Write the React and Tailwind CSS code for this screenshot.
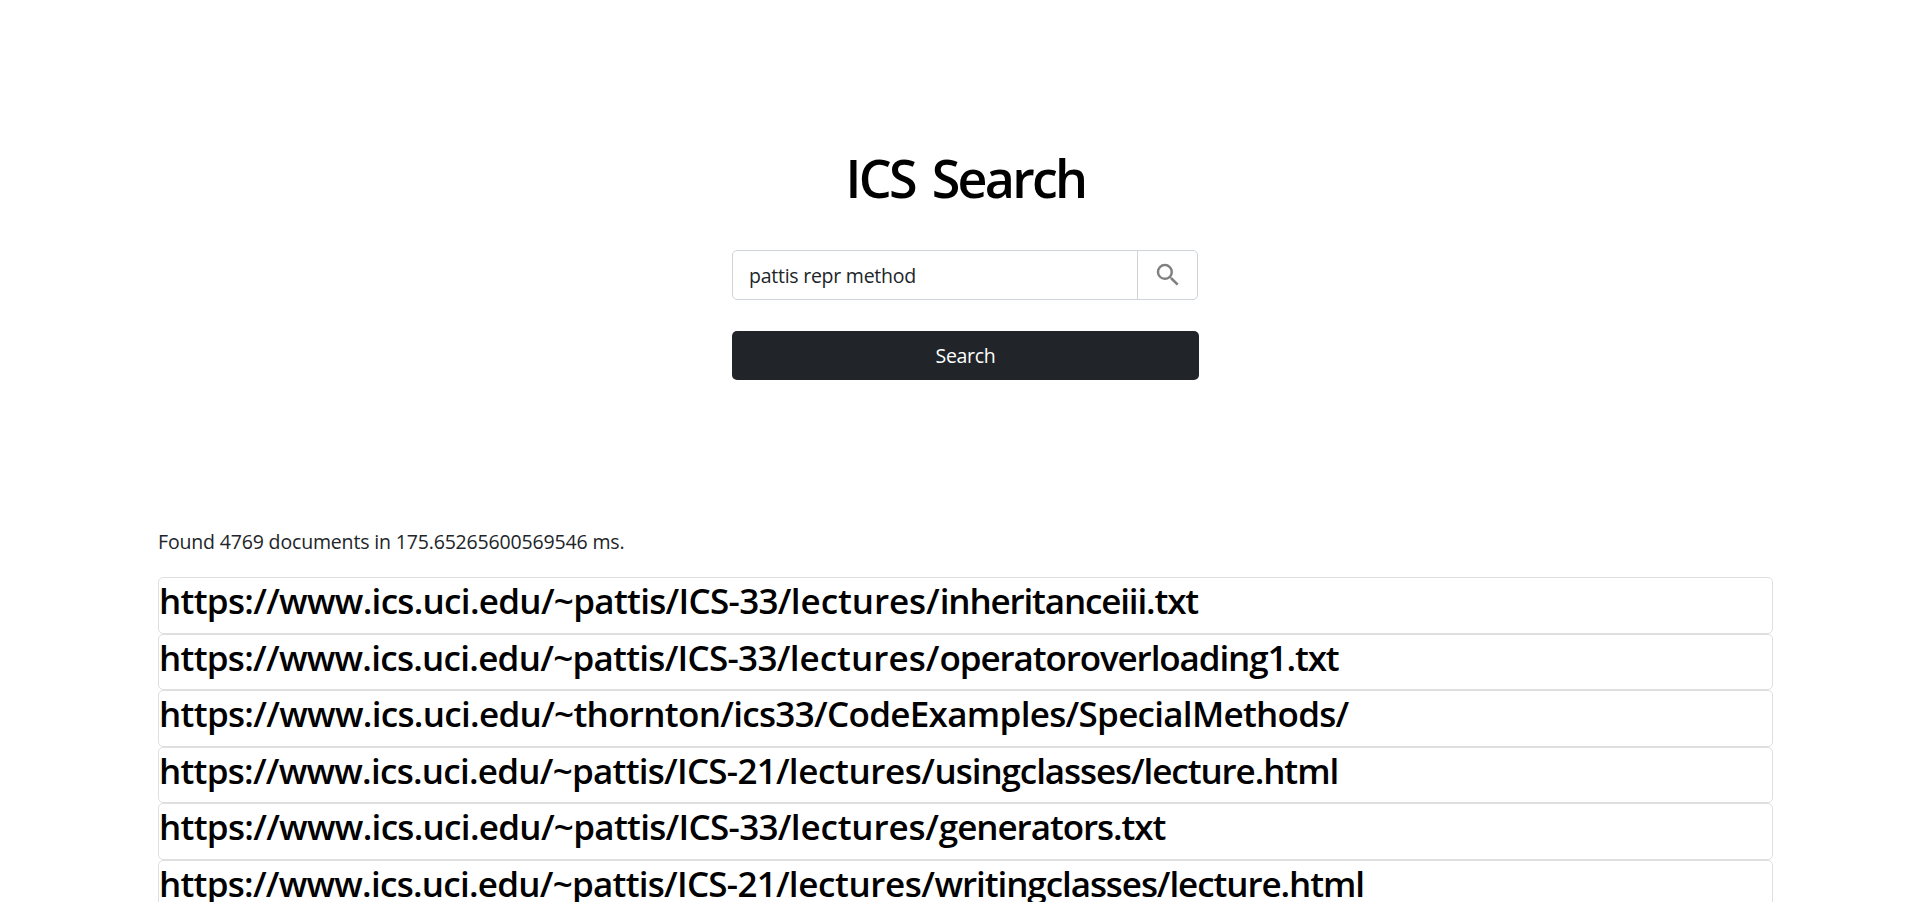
import React from "react";

const results = [
  {
    base: "https://www.ics.uci.edu/~pattis/ICS-33/",
    folder: "lectures/",
    page: "inheritanceiii.txt",
    baseTracking: "tracking-[-0.69px]",
    folderTracking: "tracking-[-0.05px]",
    pageTracking: "tracking-[-1.15px]",
  },
  {
    base: "https://www.ics.uci.edu/~pattis/ICS-33/",
    folder: "lectures/",
    page: "operatoroverloading1.txt",
    baseTracking: "tracking-[-0.72px]",
    folderTracking: "tracking-[0.05px]",
    pageTracking: "tracking-[-1.1px]",
  },
  {
    base: "https://www.ics.uci.edu/~thornton/ics33/",
    folder: "CodeExamples/",
    page: "SpecialMethods/",
    baseTracking: "tracking-[-0.68px]",
    folderTracking: "tracking-[-0.68px]",
    pageTracking: "tracking-[-0.72px]",
  },
  {
    base: "https://www.ics.uci.edu/~pattis/ICS-21/",
    folder: "lectures/",
    page: "usingclasses/lecture.html",
    baseTracking: "tracking-[-0.74px]",
    folderTracking: "tracking-[-0.4px]",
    pageTracking: "tracking-[-1.08px]",
  },
  {
    base: "https://www.ics.uci.edu/~pattis/ICS-33/",
    folder: "lectures/",
    page: "generators.txt",
    baseTracking: "tracking-[-0.69px]",
    folderTracking: "tracking-[-0.15px]",
    pageTracking: "tracking-[-1.05px]",
  },
  {
    base: "https://www.ics.uci.edu/~pattis/ICS-21/",
    folder: "lectures/",
    page: "writingclasses/lecture.html",
    baseTracking: "tracking-[-0.74px]",
    folderTracking: "tracking-[-0.4px]",
    pageTracking: "tracking-[-1.08px]",
  },
];

function SearchIcon() {
  return (
    <svg className="size-[30px]" viewBox="0 0 24 24" fill="#808080" aria-hidden="true">
      <path d="M15.5 14h-.79l-.28-.27A6.471 6.471 0 0 0 16 9.5 6.5 6.5 0 1 0 9.5 16c1.61 0 3.09-.59 4.23-1.57l.27.28v.79l5 4.99L20.49 19l-4.99-5zm-6 0C7.01 14 5 11.99 5 9.5S7.01 5 9.5 5 14 7.01 14 9.5 11.99 14 9.5 14z" />
    </svg>
  );
}

function SearchForm() {
  return (
    <form className="flex w-[467px] flex-col" onSubmit={(e) => e.preventDefault()}>
      <div className="flex h-[50px] w-[466px] rounded-[5px] border border-[#ced4da]">
        <input
          className="min-w-0 flex-1 rounded-l-[5px] pt-[2px] pl-[16px] text-[19.5px] tracking-[-0.25px] text-[#212529] outline-none"
          defaultValue="pattis repr method"
          aria-label="Query"
        />
        <span className="flex w-[60px] items-center justify-center border-l border-[#ced4da]">
          <SearchIcon />
        </span>
      </div>
      <button className="mt-[31px] h-[49px] rounded-[5px] bg-[#212529] pt-px text-[19.5px] tracking-[-0.3px] text-white">
        Search
      </button>
    </form>
  );
}

export default function App() {
  return (
    <div className="h-[902px] overflow-hidden bg-white pl-[158px] font-['Open_Sans','Noto_Sans',sans-serif] text-[#212529]">
      <main className="flex w-[1615px] flex-col">
        <header className="flex h-[527px] flex-col items-center pt-[147px]">
          <h1 className="text-[52px] leading-[62px] font-semibold tracking-[-2.7px] text-black [word-spacing:6px]">
            ICS Search
          </h1>
          <div className="mt-[41px]">
            <SearchForm />
          </div>
        </header>
        <p className="h-[50px] text-[19.5px] leading-[30px] tracking-[-0.16px]">
          Found 4769 documents in 175.65265600569546 ms.
        </p>
        <ul>
          {results.map((r) => (
            <li key={r.page} className="h-[56.6px] rounded-[5px] border border-[#dfdfdf] text-black">
              <h2 className="pt-px text-[35px] leading-[43.2px] font-semibold whitespace-nowrap">
                <span className={r.baseTracking}>{r.base}</span>
                <span className={r.folderTracking}>{r.folder}</span>
                <span className={r.pageTracking}>{r.page}</span>
              </h2>
            </li>
          ))}
        </ul>
      </main>
    </div>
  );
}
